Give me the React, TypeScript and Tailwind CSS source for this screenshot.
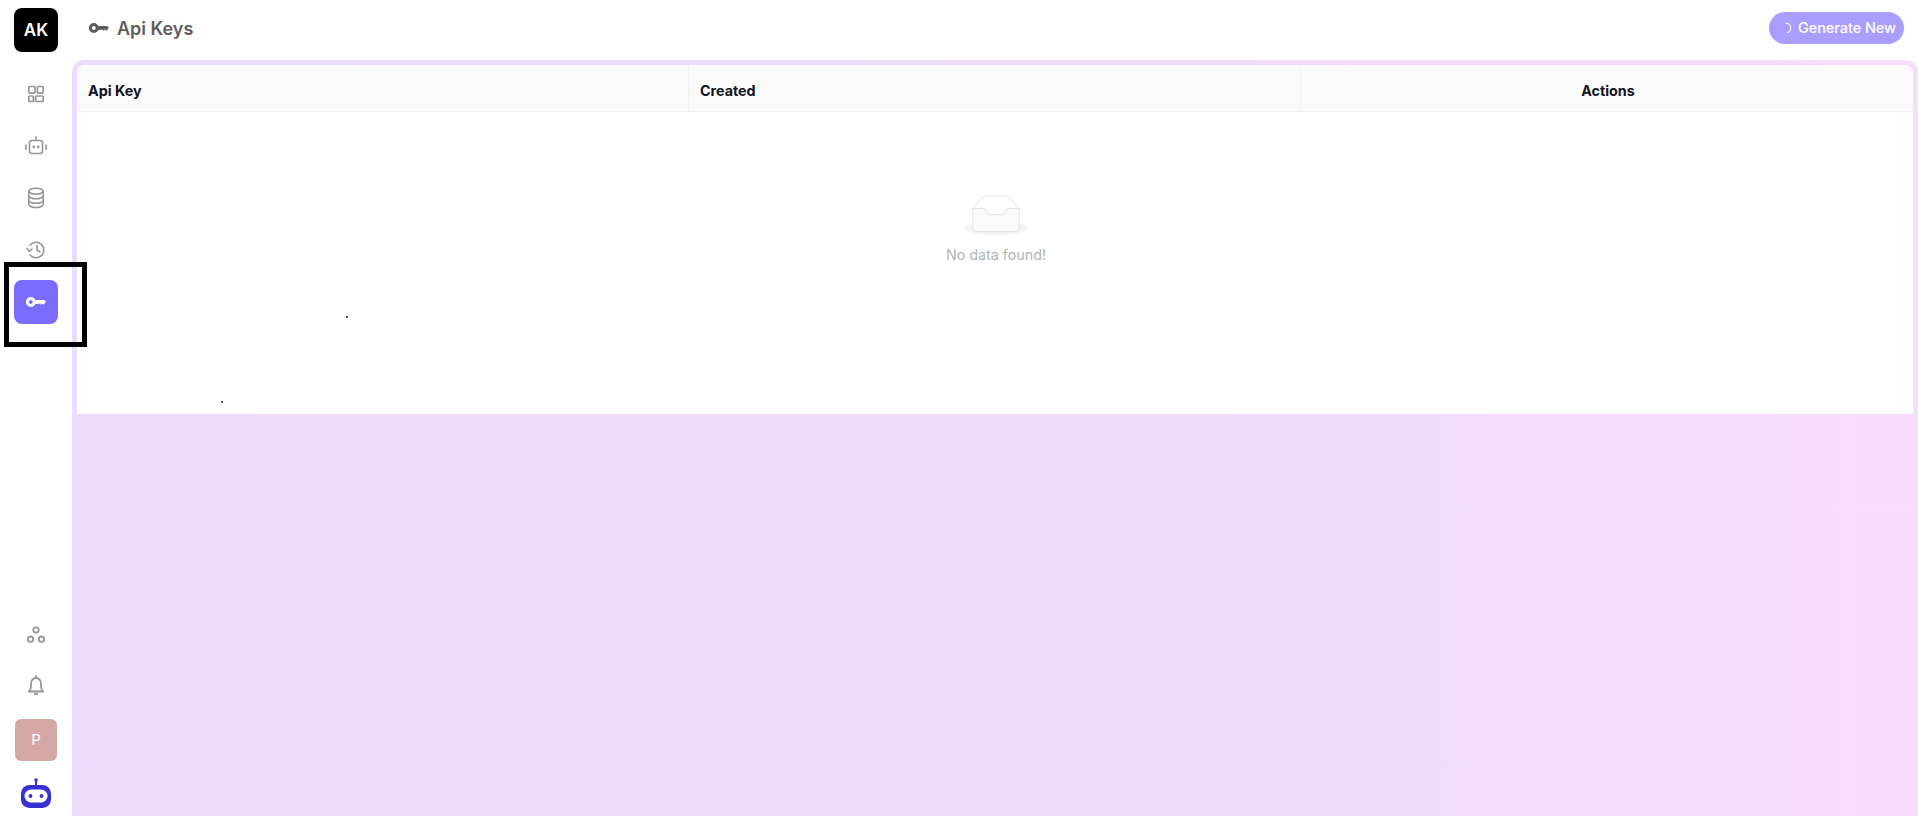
import React from 'react';

const KeyIcon = ({ className, color }: { className?: string; color: string }) => (
  <svg viewBox="0 0 20 12" className={className} fill="none">
    <circle cx="4.8" cy="6" r="3.4" stroke={color} strokeWidth="3" />
    <path d="M8.5 3.9H18L20 5.5L17.8 8.6H16.8L15.9 7.2L15 8.6H14L13.1 7.2L12.2 8.1H8.5Z" fill={color} />
  </svg>
);

const navIconClass = 'w-6 h-6 text-[#969696]';

const DashboardIcon = () => (
  <svg viewBox="0 0 24 24" className={navIconClass} fill="none" stroke="currentColor" strokeWidth="1.7" strokeLinejoin="round">
    <rect x="4.8" y="4.5" width="6.2" height="6.6" rx="0.8" />
    <rect x="13.4" y="4.5" width="5.8" height="6.6" rx="0.8" />
    <rect x="4.8" y="14" width="4.6" height="5.5" rx="0.8" />
    <rect x="11.6" y="14" width="7.6" height="5.5" rx="0.8" />
  </svg>
);

const BotIcon = () => (
  <svg viewBox="0 0 24 24" className={navIconClass} fill="none" stroke="currentColor" strokeWidth="1.6" strokeLinecap="round">
    <rect x="5.5" y="6.5" width="13" height="13" rx="2.5" />
    <path d="M12 3V6.5M2 11V15.5M22 11V15.5" />
    <circle cx="9.8" cy="13" r="0.6" fill="currentColor" />
    <circle cx="14.2" cy="13" r="0.6" fill="currentColor" />
  </svg>
);

const DatabaseIcon = () => (
  <svg viewBox="0 0 24 24" className={navIconClass} fill="none" stroke="currentColor" strokeWidth="1.6">
    <ellipse cx="12" cy="5.2" rx="7.2" ry="3" />
    <path d="M4.8 5.2V18.5C4.8 20.2 8.1 21.5 12 21.5S19.2 20.2 19.2 18.5V5.2" />
    <path d="M4.8 9.8C4.8 11.5 8.1 12.8 12 12.8S19.2 11.5 19.2 9.8" />
    <path d="M4.8 14.3C4.8 16 8.1 17.3 12 17.3S19.2 16 19.2 14.3" />
  </svg>
);

const HistoryIcon = () => (
  <svg viewBox="0 0 24 24" className={navIconClass} fill="none" stroke="currentColor" strokeWidth="1.6" strokeLinecap="round" strokeLinejoin="round">
    <path d="M6 7A7.8 7.8 0 1 1 6 17" />
    <path d="M3 10.5L5.2 13.3L8 11" />
    <path d="M13 7.5V12L16 14" />
  </svg>
);

const CirclesIcon = () => (
  <svg viewBox="0 0 24 24" className={navIconClass} fill="none" stroke="currentColor" strokeWidth="1.8">
    <circle cx="12" cy="7" r="2.7" />
    <circle cx="6.5" cy="16.2" r="2.7" />
    <circle cx="17.5" cy="16.2" r="2.7" />
  </svg>
);

const BellIcon = () => (
  <svg viewBox="0 0 24 24" className={navIconClass} fill="none" stroke="currentColor" strokeWidth="1.8" strokeLinecap="round" strokeLinejoin="round">
    <path d="M5 18.5C6.5 17 7 15.5 7 13V10.5C7 7.5 9.2 5 12 5S17 7.5 17 10.5V13C17 15.5 17.5 17 19 18.5Z" />
    <path d="M12 3V5M10.8 21H13.2" />
  </svg>
);

const RobotLogo = () => (
  <svg viewBox="0 0 30 30" className="w-[30px] h-[30px]" fill="none">
    <circle cx="15" cy="2" r="1.8" fill="#3730d4" />
    <rect x="14" y="2" width="2" height="6" fill="#3730d4" />
    <rect x="0" y="7" width="30" height="23" rx="8.5" fill="#3730d4" />
    <rect x="3.5" y="11.5" width="23" height="13" rx="6.5" fill="#ffffff" />
    <circle cx="9.5" cy="18" r="1.9" fill="#3730d4" />
    <circle cx="20.5" cy="18" r="1.9" fill="#3730d4" />
  </svg>
);

const EmptyBox = () => (
  <svg viewBox="0 0 64 41" className="w-[64px] h-[41px]" fill="none">
    <ellipse cx="32" cy="33" rx="32" ry="7" fill="#f5f5f5" />
    <path d="M55 13.3 44.8 1.8C44.3 1.2 43.6.9 42.9.9H21.1C20.4.9 19.7 1.2 19.2 1.8L9 13.3V23H55V13.3Z" stroke="#e3e3e3" fill="#ffffff" />
    <path d="M41.6 16.6C41.6 14.9 42.6 13.5 43.9 13.5H55V32.6C55 34.8 53.6 36.7 51.9 36.7H12.1C10.4 36.7 9 34.8 9 32.6V13.5H20.1C21.4 13.5 22.4 14.9 22.4 16.6 22.4 18.3 23.4 19.6 24.7 19.6H39.3C40.6 19.6 41.6 18.3 41.6 16.6Z" stroke="#e3e3e3" fill="#fafafa" />
  </svg>
);

const Sidebar = () => (
  <aside className="w-[72px] h-full shrink-0 bg-white flex flex-col items-center pt-2 pb-2">
    <div className="w-11 h-11 rounded-lg bg-black text-white flex items-center justify-center pt-px text-[17px] font-semibold">AK</div>
    <nav className="flex flex-col gap-2 mt-5">
      <div className="w-11 h-11 flex items-center justify-center"><DashboardIcon /></div>
      <div className="w-11 h-11 flex items-center justify-center"><BotIcon /></div>
      <div className="w-11 h-11 flex items-center justify-center"><DatabaseIcon /></div>
      <div className="w-11 h-11 flex items-center justify-center"><HistoryIcon /></div>
      <div className="w-11 h-11 rounded-lg bg-[#7b6cff] flex items-center justify-center">
        <KeyIcon className="w-5 h-3" color="#ffffff" />
      </div>
    </nav>
    <div className="mt-auto flex flex-col items-center">
      <div className="h-6 flex items-center justify-center"><CirclesIcon /></div>
      <div className="h-6 mt-[26px] flex items-center justify-center"><BellIcon /></div>
      <div className="w-[42px] h-[42px] mt-[22px] rounded-md bg-[#d3a8a4] text-white flex items-center justify-center text-[15px]">P</div>
      <div className="mt-[17px] h-[30px]"><RobotLogo /></div>
    </div>
  </aside>
);

const Header = () => (
  <header className="h-14 mb-1 shrink-0 bg-white flex items-center justify-between pl-[17px] pr-[14px]">
    <div className="flex items-center gap-2">
      <KeyIcon className="w-5 h-3" color="#5c5c5c" />
      <h1 className="text-[18px] font-semibold text-[#5f5c5c]">Api Keys</h1>
    </div>
    <button className="w-[135px] h-8 rounded-full bg-[#a99dff] text-white text-[14.4px] font-medium flex items-center justify-end pr-[8px] gap-[6px]">
      <svg viewBox="0 0 14 14" className="w-[12px] h-[12px]" fill="none">
        <path d="M7 1.5A5.5 5.5 0 0 1 8.5 12.3" stroke="#ffffff" strokeWidth="1.2" strokeLinecap="round" />
      </svg>
      Generate New
    </button>
  </header>
);

const KeysTable = () => (
  <div className="bg-white rounded-t-lg h-[349px]">
    <div className="grid grid-cols-3 h-[47px] bg-[#fafafa] border-b border-[#f0f0f0] rounded-t-lg text-[14.3px] font-bold text-[#14141f]">
      <div className="flex items-center pl-[11px] pt-[6px] border-r border-[#f0f0f0]">Api Key</div>
      <div className="flex items-center pl-[11px] pt-[6px] border-r border-[#f0f0f0]">Created</div>
      <div className="flex items-center justify-center pt-[6px] pl-[2px]">Actions</div>
    </div>
    <div className="flex flex-col items-center pt-[83px] pl-[2px]">
      <EmptyBox />
      <p className="mt-[8px] text-[14.3px] text-[#b3b3b3]">No data found!</p>
    </div>
  </div>
);

export default function App() {
  return (
    <div className="relative w-screen h-screen overflow-hidden flex bg-white font-['Inter',sans-serif]">
      <Sidebar />
      <div className="flex-1 min-w-0 flex flex-col">
        <Header />
        <main className="flex-1 rounded-t-xl p-[5px] bg-gradient-to-r from-[#ecdcfe] via-[#efdcfd] via-60% to-[#f8dcfb]">
          <KeysTable />
        </main>
      </div>
      {/* annotation box over the active nav item */}
      <div className="absolute left-1 top-[262px] w-[83px] h-[85px] border-[5px] border-black pointer-events-none" />
      <span className="absolute left-[346px] top-[316px] w-[2px] h-[2px] bg-[#555555]" />
      <span className="absolute left-[221px] top-[401px] w-[2px] h-[2px] bg-[#555555]" />
    </div>
  );
}
